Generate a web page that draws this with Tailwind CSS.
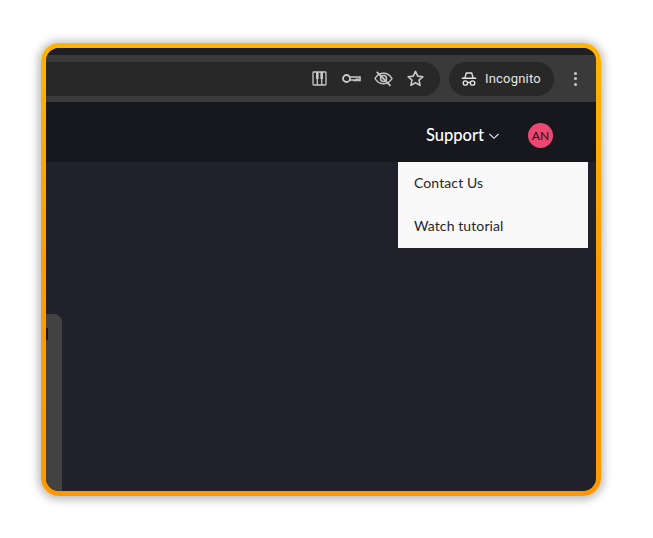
<!DOCTYPE html>
<html lang="en">
<head>
  <meta charset="UTF-8">
  <title>Support menu</title>
  <script src="https://cdn.jsdelivr.net/npm/@tailwindcss/browser@4"></script>
</head>
<body class="bg-white w-[653px] h-[538px] overflow-hidden font-['Lato',sans-serif]">
  <div class="pt-[43px] pl-[41px]">
    <div class="w-[560px] h-[453px] p-[5px] rounded-[18px] bg-linear-to-b from-[#ffb400] via-[#ff9c00] via-50% to-[#ff9800] shadow-[0_1px_9px_3px_rgba(0,0,0,0.26)]">
      <div class="h-full rounded-[13px] overflow-hidden flex flex-col bg-[#20212b] relative">

        <!-- tab strip -->
        <div class="h-[7px] bg-[#1e1e23]"></div>

        <!-- browser toolbar -->
        <div class="h-[47px] bg-[#3a3a3a] flex items-center">
          <div class="w-[394px] h-[34px] bg-[#282828] rounded-r-full flex items-center justify-end pr-[15px] gap-[13px] text-[#c8c8c8]">
            <svg width="19" height="19" viewBox="0 0 19 19" fill="none" stroke="currentColor" stroke-width="1.3"><rect x="3" y="3" width="13" height="13" rx="0.800"/><path d="M7.300 16V9M11.700 16V9"/><path d="M6 3h2.600v7H6zM10.400 3H13v7h-2.600z" fill="currentColor" stroke="none"/></svg>
            <svg width="19" height="19" viewBox="0 0 19 19" fill="none" stroke="currentColor" stroke-width="1.800"><circle cx="4.500" cy="9.500" r="3.500"/><path d="M8 8h10v3.400h-2v-1.200h-1.800v1.200H12V11H8" stroke-width="1.600"/></svg>
            <svg width="19" height="19" viewBox="0 0 19 19" fill="none" stroke="currentColor" stroke-width="1.500"><path d="M1 9.500C3 6 6 4.200 9.500 4.200S16 6 18 9.500c-2 3.500-5 5.300-8.500 5.300S3 13 1 9.500z"/><circle cx="9.500" cy="9.500" r="3"/><path d="M2.800 2.800 16.500 16.800" stroke-width="1.800"/></svg>
            <svg width="19" height="19" viewBox="0 0 19 19" fill="none" stroke="currentColor" stroke-width="1.600" stroke-linejoin="round"><path d="M9.500 2.300 11.700 7.100 16.900 7.700 13 11.200 14.100 16.400 9.500 13.800 4.900 16.400 6 11.200 2.100 7.700 7.300 7.100z"/></svg>
          </div>
          <div class="ml-[9px] w-[105px] h-[34px] bg-[#282828] rounded-full flex items-center pl-[12px] text-[#e4e4e4]">
            <svg width="16" height="16" viewBox="0 0 16 16" fill="none" stroke="currentColor" stroke-width="1.300"><path d="M3.900 7 5.300 2h5.400l1.400 5"/><path d="M0.800 7.300h14.400" stroke-width="1.500"/><circle cx="4.400" cy="12" r="2.200"/><circle cx="11.600" cy="12" r="2.200"/><path d="M6.600 11.500h2.800"/></svg>
            <span class="ml-[8px] text-[13px] font-['Roboto',sans-serif] font-normal tracking-[0.2px]">Incognito</span>
          </div>
          <div class="ml-[20px] flex flex-col gap-[2.500px]">
            <span class="w-[3px] h-[3px] rounded-full bg-[#c8c8c8]"></span>
            <span class="w-[3px] h-[3px] rounded-full bg-[#c8c8c8]"></span>
            <span class="w-[3px] h-[3px] rounded-full bg-[#c8c8c8]"></span>
          </div>
        </div>

        <!-- app nav -->
        <div class="h-[60px] bg-[#17181e] flex items-center justify-end pr-[43px] pt-[7px]">
          <span class="text-white text-[16.500px] font-medium">Support</span>
          <svg class="ml-[4px] mt-[1px]" width="12" height="12" viewBox="0 0 12 12" fill="none" stroke="#e8e8e8" stroke-width="1.100"><path d="M1.500 4 6 8.300 10.500 4"/></svg>
          <div class="ml-[28px] w-[25px] h-[25px] rounded-full bg-[#ee4672] flex items-center justify-center text-[#1a1a22] text-[12px] font-medium">AN</div>
        </div>

        <!-- page body -->
        <div class="flex-1 flex overflow-hidden">
          <div class="w-[16px] mt-[152px] bg-[#424242] rounded-tr-[8px]">
            <div class="w-[2px] h-[12px] bg-[#17181e] mt-[14px]"></div>
          </div>
        </div>

        <!-- dropdown -->
        <div class="absolute top-[114px] left-[352px] w-[190px] h-[86px] bg-[#f9f9f9] flex flex-col gap-[3px] text-[14px] tracking-[0.1px] text-[#25262c]">
          <div class="h-[40px] flex items-center pl-[16px]">Contact Us</div>
          <div class="h-[40px] flex items-center pl-[16px]">Watch tutorial</div>
        </div>
      </div>
    </div>
  </div>
</body>
</html>
